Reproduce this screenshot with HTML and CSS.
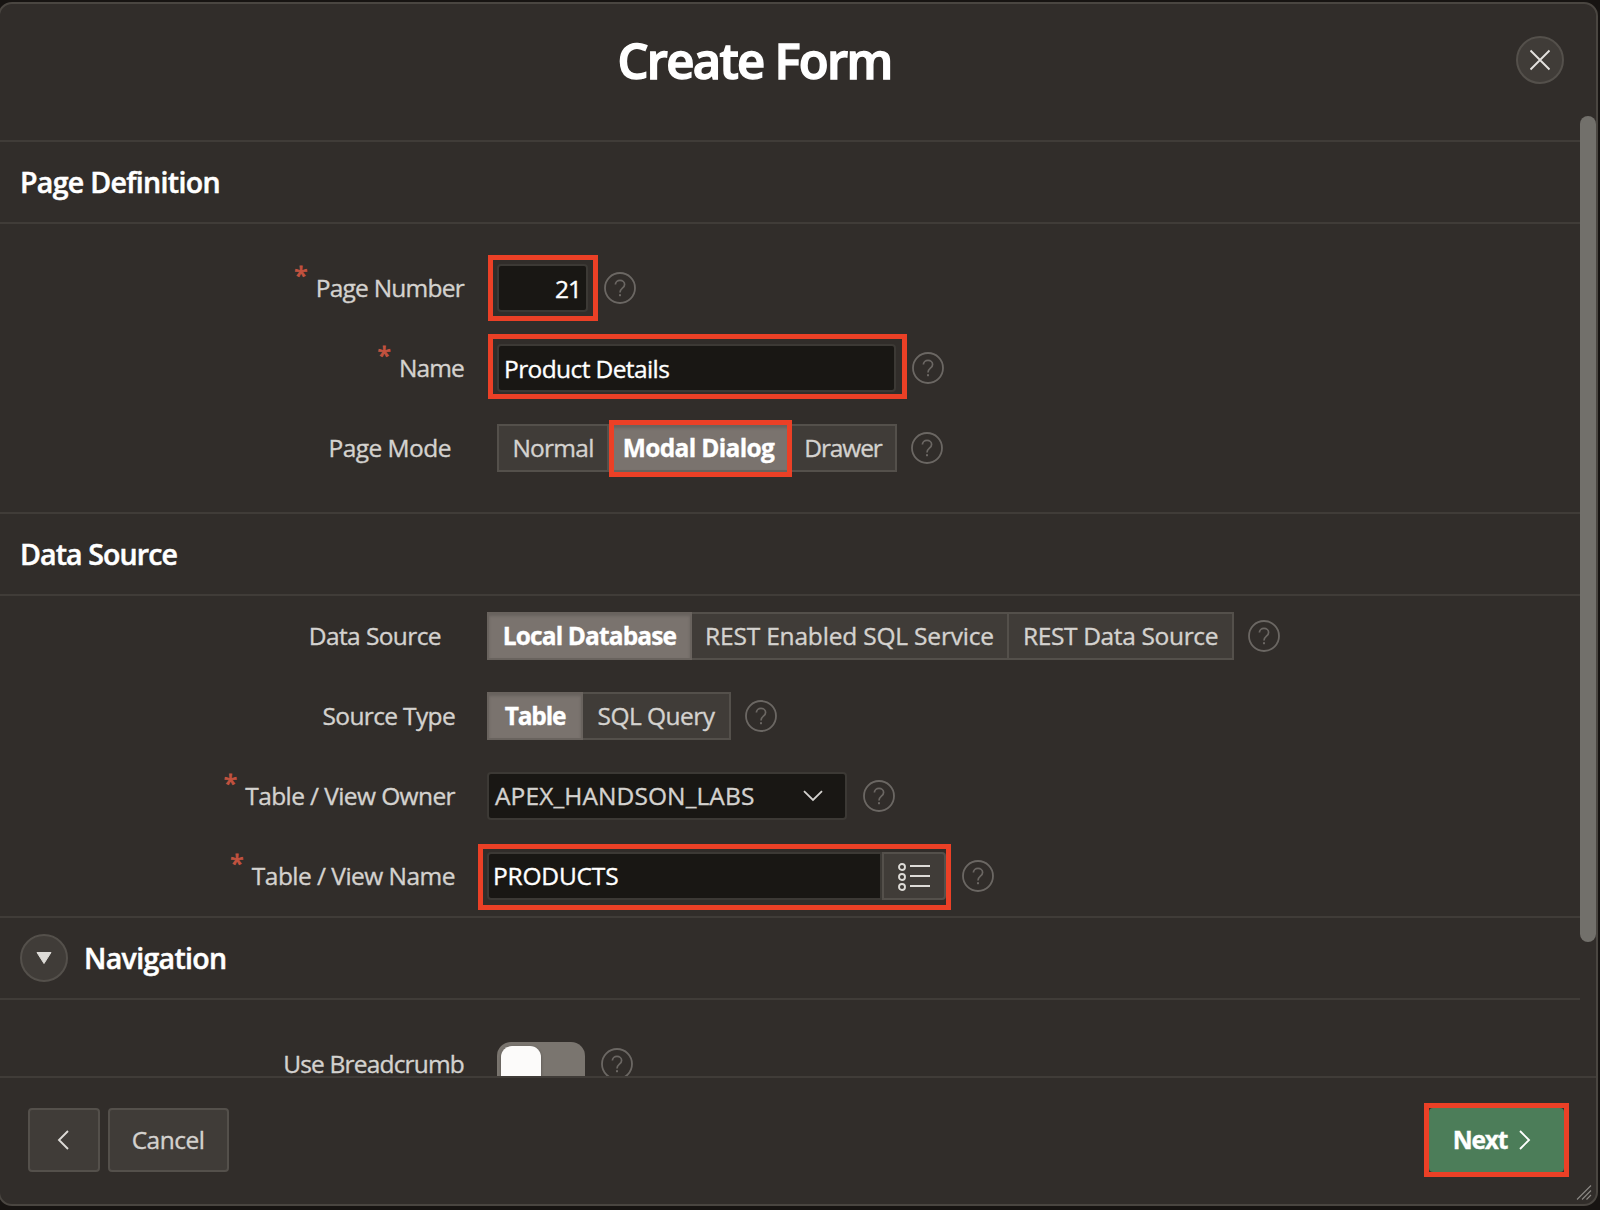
FILE: index.html
```html
<!DOCTYPE html>
<html lang="en">
<head>
<meta charset="utf-8">
<title>Create Form</title>
<link rel="stylesheet" href="styles.css">
</head>
<body>
<svg class="defs" width="0" height="0">
  <symbol id="help" viewBox="0 0 32 32">
    <circle cx="16" cy="16" r="15" fill="none" stroke="currentColor" stroke-width="1.8"/>
    <path d="M11.4 12.6c0-2.6 2-4.2 4.6-4.2s4.6 1.7 4.6 4.1c0 3.7-4.6 3.8-4.6 8" fill="none" stroke="currentColor" stroke-width="1.7"/>
    <rect x="15" y="22.2" width="2" height="2" fill="currentColor"/>
  </symbol>
</svg>
<div class="dialog">
  <header class="dialog-header">
    <h1 class="dialog-title">Create Form</h1>
    <button class="round-btn" aria-label="Close">
      <svg width="24" height="24" viewBox="0 0 24 24"><path d="M2.5 2.5l19 19M21.5 2.5l-19 19" fill="none" stroke="#e4e2df" stroke-width="1.9"/></svg>
    </button>
  </header>

  <div class="dialog-body">
    <main class="content">
      <section>
        <div class="section-head"><h2 class="tk-70">Page Definition</h2></div>
        <div class="rows rows-wide">
          <div class="row">
            <div class="label"><i class="req">*</i><span class="tk-75">Page Number</span></div>
            <div class="mark mark-field"><div class="field field-number"><span class="tk-100">21</span></div></div>
            <svg class="help"><use href="#help"/></svg>
          </div>
          <div class="row">
            <div class="label"><i class="req">*</i><span class="tk-85">Name</span></div>
            <div class="mark mark-name"><div class="field field-name"><span class="tk-60">Product Details</span></div></div>
            <svg class="help"><use href="#help"/></svg>
          </div>
          <div class="row">
            <div class="label label-mode"><span class="tk-55">Page Mode</span></div>
            <div class="pills">
              <div class="pill pill-normal tk-75">Normal</div>
              <div class="pill pill-modal pill-on mark mark-pill tk-65">Modal Dialog</div>
              <div class="pill pill-drawer tk-110">Drawer</div>
            </div>
            <svg class="help help-near"><use href="#help"/></svg>
          </div>
        </div>
      </section>

      <section>
        <div class="section-head"><h2 class="tk-85">Data Source</h2></div>
        <div class="rows rows-tight">
          <div class="row">
            <div class="label label-source"><span class="tk-60">Data Source</span></div>
            <div class="pills">
              <div class="pill pill-local pill-on tk-85">Local Database</div>
              <div class="pill pill-rest tk-20">REST Enabled SQL Service</div>
              <div class="pill pill-restds tk-35">REST Data Source</div>
            </div>
            <svg class="help help-near"><use href="#help"/></svg>
          </div>
          <div class="row">
            <div class="label"><span class="tk-65">Source Type</span></div>
            <div class="pills">
              <div class="pill pill-table pill-on tk-110">Table</div>
              <div class="pill pill-sql tk-55">SQL Query</div>
            </div>
            <svg class="help help-near"><use href="#help"/></svg>
          </div>
          <div class="row">
            <div class="label"><i class="req">*</i><span class="tk-60">Table / View Owner</span></div>
            <div class="field field-select">
              <span>APEX_HANDSON_LABS</span>
              <svg width="20" height="12" viewBox="0 0 20 12"><path d="M1 1.2l9 8.8 9-8.8" fill="none" stroke="#d4d2cf" stroke-width="1.8"/></svg>
            </div>
            <svg class="help"><use href="#help"/></svg>
          </div>
          <div class="row">
            <div class="label"><i class="req">*</i><span class="tk-55">Table / View Name</span></div>
            <div class="mark mark-lov lov">
              <div class="field field-lov"><span class="tk-20">PRODUCTS</span></div>
              <div class="lov-btn">
                <svg width="34" height="30" viewBox="0 0 34 30" fill="none" stroke="#dddbd7" stroke-width="1.9">
                  <circle cx="5" cy="5" r="3"/><circle cx="5" cy="15" r="3"/><circle cx="5" cy="25" r="3"/>
                  <path d="M13 4h20M13 14h20M13 24h20"/>
                </svg>
              </div>
            </div>
            <svg class="help"><use href="#help"/></svg>
          </div>
        </div>
      </section>

      <section>
        <div class="section-head">
          <button class="round-btn" aria-label="Collapse">
            <svg width="16" height="12" viewBox="0 0 16 12"><path d="M1 .5h14L8 11.5z" fill="#dddbd7" stroke="#dddbd7" stroke-linejoin="round"/></svg>
          </button>
          <h2 class="tk-65">Navigation</h2>
        </div>
        <div class="rows rows-wide">
          <div class="row">
            <div class="label"><span class="tk-80">Use Breadcrumb</span></div>
            <div class="switch"><div class="knob"></div></div>
            <svg class="help"><use href="#help"/></svg>
          </div>
        </div>
      </section>
    </main>
    <div class="scrollbar"><div class="thumb"></div></div>
  </div>

  <footer class="dialog-footer">
    <button class="btn btn-back" aria-label="Back">
      <svg width="12" height="20" viewBox="0 0 12 20"><path d="M11 1L2 10l9 9" fill="none" stroke="#dddbd7" stroke-width="1.9"/></svg>
    </button>
    <button class="btn btn-cancel tk-50">Cancel</button>
    <div class="mark mark-next">
      <button class="btn btn-next"><span class="tk-110">Next</span>
        <svg width="12" height="20" viewBox="0 0 12 20"><path d="M1 1l9 9-9 9" fill="none" stroke="#fff" stroke-width="1.9"/></svg>
      </button>
    </div>
    <svg class="grip" width="16" height="16" viewBox="0 0 16 16"><path d="M1 15.5L15 1.500M6 15.5L15 6.500M10.500 15.500L15 11" stroke="#8b8884" stroke-width="1.100"/></svg>
  </footer>
</div>
</body>
</html>
```

FILE: styles.css
```css
* { box-sizing: border-box; }
body {
  margin: 0;
  height: 1210px;
  overflow: hidden;
  padding-top: 2px;
  background: #171412;
  font: 24.5px/1 "Open Sans", "Noto Sans", sans-serif;
  color: #d4d2cf;
  -webkit-text-stroke: .35px currentColor;
}
.defs { position: absolute; }
h1, h2 { margin: 0; color: #fff; font-weight: 600; }
h2 { -webkit-text-stroke: .5px #fff; }
button { font: inherit; color: inherit; margin: 0; padding: 0; }

/* tracking steps */
.tk-20 { letter-spacing: -.19px; }
.tk-35 { letter-spacing: -.35px; }
.tk-50 { letter-spacing: -.5px; }
.tk-55 { letter-spacing: -.53px; }
.tk-60 { letter-spacing: -.6px; }
.tk-65 { letter-spacing: -.65px; }
.tk-70 { letter-spacing: -.68px; }
.tk-75 { letter-spacing: -.76px; }
.tk-80 { letter-spacing: -.82px; }
.tk-85 { letter-spacing: -.87px; }
.tk-100 { letter-spacing: -1px; }
.tk-110 { letter-spacing: -1.15px; }

.dialog {
  width: 1600px;
  height: 1204px;
  margin-left: -2px;
  border: 2px solid #4a4641;
  border-radius: 14px;
  background: #312d2a;
  display: flex;
  flex-direction: column;
  overflow: hidden;
}
.dialog-header {
  height: 112px;
  flex: none;
  display: flex;
  align-items: center;
  padding-right: 32px;
}
.dialog-title {
  flex: 1;
  text-align: center;
  padding-right: 7px;
  font-size: 49px;
  letter-spacing: -1.75px;
  -webkit-text-stroke: 1.4px #fff;
}
.round-btn {
  width: 48px;
  height: 48px;
  flex: none;
  border-radius: 50%;
  border: 2px solid #54504b;
  background: #403c38;
  display: flex;
  align-items: center;
  justify-content: center;
}

.dialog-body {
  height: 960px;
  flex: none;
  display: flex;
  overflow: hidden;
}
.content { width: 1580px; padding-top: 24px; }
.section-head {
  height: 84px;
  border-top: 2px solid #403c38;
  border-bottom: 2px solid #403c38;
  padding: 0 20px;
  display: flex;
  align-items: center;
  gap: 16px;
}
.section-head h2 { font-size: 28.5px; padding-top: 1px; }
.section-head .round-btn svg { margin-top: -1px; }

.rows-wide { padding: 24px 0; }
.row { height: 80px; display: flex; align-items: center; }
.label {
  width: 497px;
  padding-right: 33px;
  display: flex;
  justify-content: flex-end;
  white-space: nowrap;
}
.rows-tight .label { width: 487px; padding-right: 32px; }
.rows-wide .label-mode { padding-right: 46px; }
.rows-tight .label-source { padding-right: 46px; }
.req {
  font-style: normal;
  color: #c2523f;
  margin: -13px 8px 13px 0;
  -webkit-text-stroke: .9px #c2523f;
}

.field {
  height: 48px;
  border: 2px solid #3c3935;
  border-radius: 4px;
  background: #191714;
  color: #fff;
  display: flex;
  align-items: center;
  padding: 2px 5px 0;
}
.field-number { width: 91px; justify-content: flex-end; }
.field-name { width: 399px; }
.field-select {
  width: 360px;
  color: #d4d2cf;
  justify-content: space-between;
  padding: 0 22px 0 6px;
  letter-spacing: .1px;
}
.field-lov { width: 395px; border-radius: 4px 0 0 4px; padding: 0 4px; }
.lov { display: flex; }
.lov-btn {
  width: 64px;
  height: 48px;
  border: 2px solid #54504b;
  border-radius: 0 4px 4px 0;
  background: #403c38;
  display: flex;
  align-items: center;
  justify-content: center;
  padding-top: 1px;
}
.help {
  width: 32px;
  height: 32px;
  margin-left: 16px;
  color: #6b6763;
}
.help-near { margin-left: 14px; }

.pills { display: flex; }
.pill {
  height: 48px;
  border: 2px solid #54504b;
  border-left-width: 0;
  background: #403c38;
  display: flex;
  align-items: center;
  justify-content: center;
  white-space: nowrap;
}
.pill:first-child { border-left-width: 2px; }
.pill-on {
  background: #7a736e;
  border-color: #69635e;
  color: #fff;
  font-weight: 700;
  box-shadow: inset 0 2px 3px rgba(0, 0, 0, .15);
}
.pill-normal { width: 112px; }
.pill-modal { width: 182px; padding-right: 1px; }
.pill-drawer { width: 106px; }
.pill-local { width: 205px; }
.pill-rest { width: 317px; }
.pill-restds { width: 225px; }
.pill-table { width: 96px; }
.pill-sql { width: 148px; }

/* red call-out frames, drawn over the controls */
.mark { position: relative; }
.mark::after {
  content: "";
  position: absolute;
  z-index: 1;
  border: 5px solid #eb4026;
}
.mark-field::after { inset: -9px -10px -9px -9px; }
.mark-name::after { inset: -10px -11px -7px -9px; }
.mark-pill::after { inset: -6px -3px -7px 0; }
.mark-lov::after { inset: -8px -5px -10px -9px; }
.mark-next::after { inset: -5px; }

.switch {
  width: 88px;
  height: 48px;
  border-radius: 14px;
  background: #7a756f;
  padding: 4px;
  margin-top: 4px;
}
.knob {
  width: 40px;
  height: 40px;
  border-radius: 11px;
  background: #fcfbfa;
  box-shadow: 0 1px 3px rgba(0, 0, 0, .35);
}

.scrollbar { width: 16px; }
.thumb { height: 826px; border-radius: 8px; background: #72706b; }

.dialog-footer {
  flex: 1;
  position: relative;
  border-top: 2px solid #403c38;
  padding: 30px 32px 0 28px;
  display: flex;
  align-items: flex-start;
  gap: 8px;
}
.btn {
  height: 64px;
  border: 2px solid #54504b;
  border-radius: 4px;
  background: #403c38;
  display: flex;
  align-items: center;
  justify-content: center;
}
.btn-back { width: 72px; padding-right: 3px; }
.btn-cancel { width: 121px; padding-right: 1px; }
.mark-next { margin-left: auto; }
.btn-next {
  width: 135px;
  border: 0;
  background: #4c7d59;
  color: #fff;
  font-weight: 700;
  gap: 12px;
  padding-right: 9px;
}
.grip { position: absolute; right: 4px; bottom: 4px; }
```
